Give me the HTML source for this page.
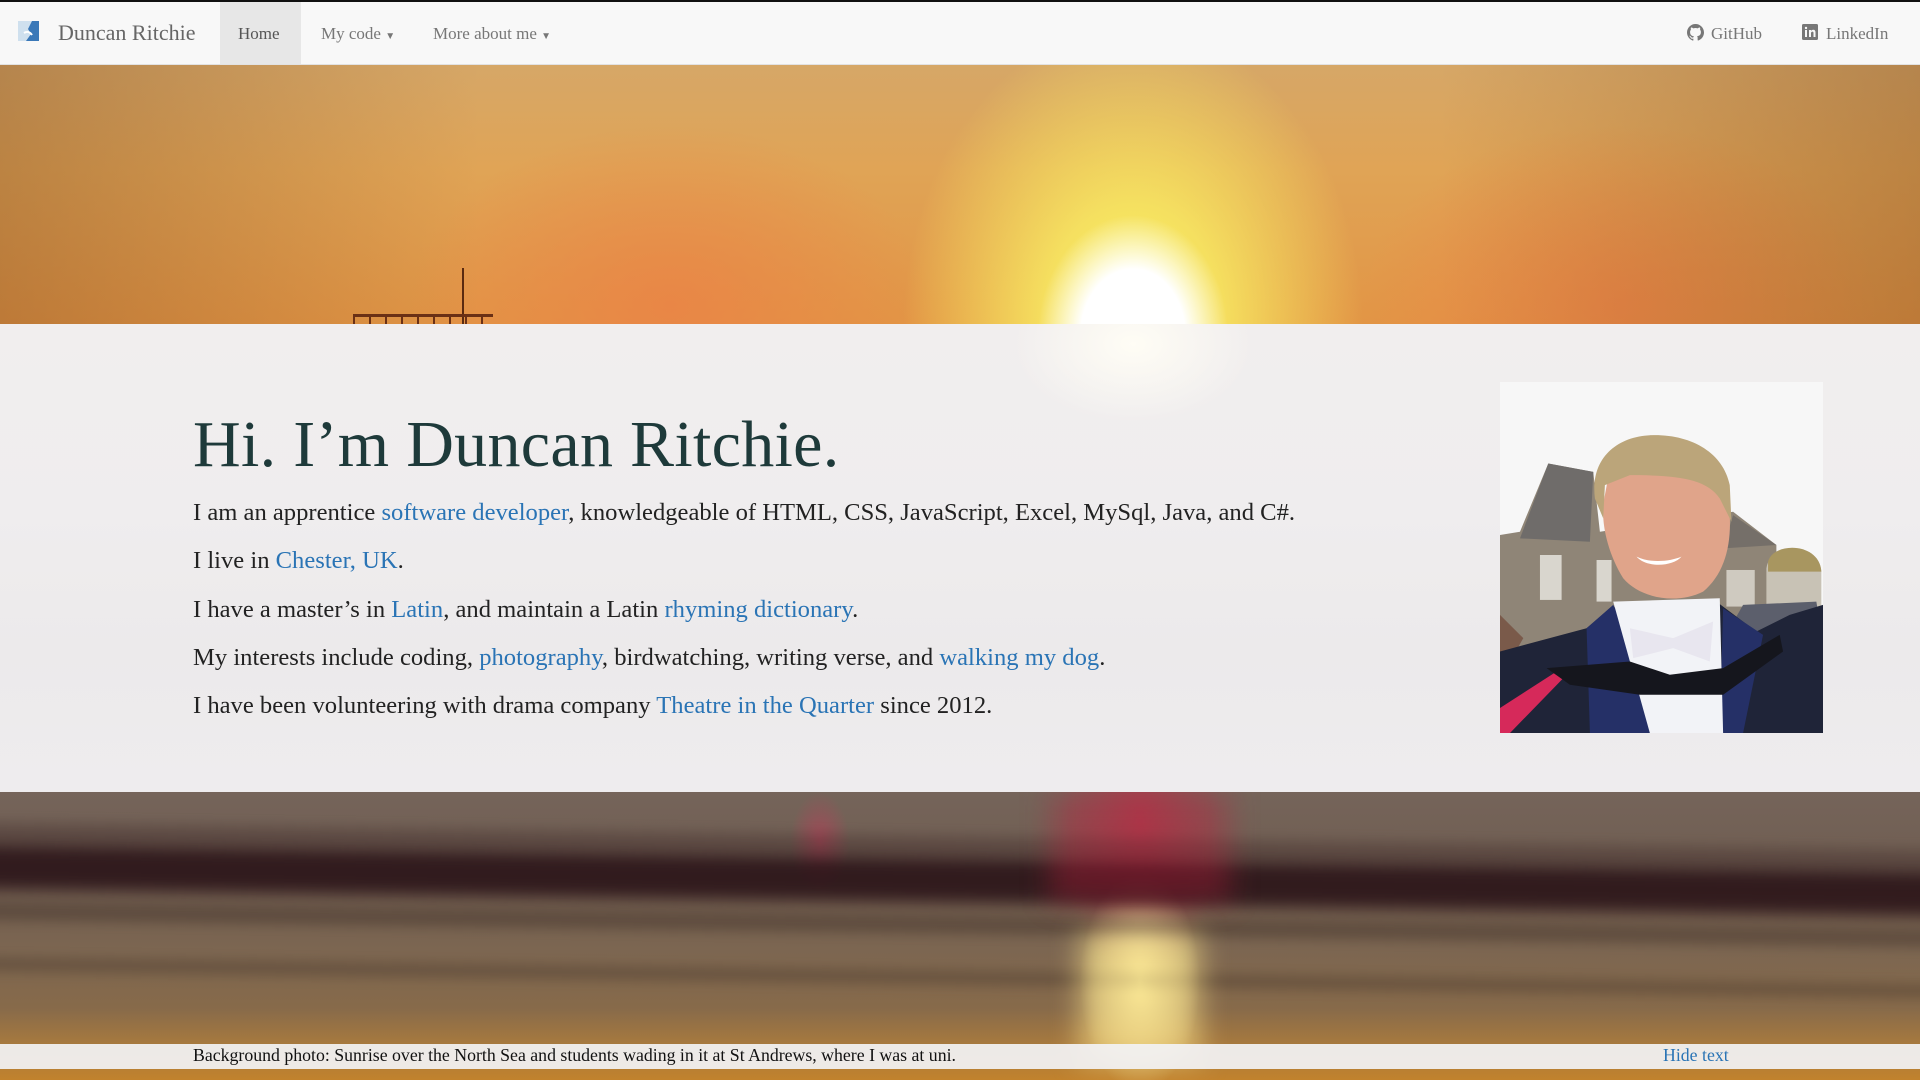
<!DOCTYPE html>
<html><head><meta charset="utf-8"><style>
*{margin:0;padding:0;box-sizing:border-box}
body{width:1920px;height:1080px;overflow:hidden;position:relative;font-family:"Liberation Serif",serif;background:#6b4a2a}
#nav{position:absolute;left:0;top:0;width:1920px;height:65px;background:#f8f8f8;border-top:2px solid #111;border-bottom:1px solid #e2e2e2;z-index:5;color:#777;font-size:17px}
#nav .i{position:absolute;top:22px}
#hero{position:absolute;left:0;top:65px;width:1920px;height:260px;
background:radial-gradient(ellipse 95px 120px at 1133px 270px,#fff 0%,#fff 55%,rgba(255,255,240,0) 100%),
radial-gradient(ellipse 230px 300px at 1133px 260px,rgba(250,250,90,1) 0%,rgba(250,240,100,.8) 40%,rgba(245,190,80,0) 100%),
radial-gradient(ellipse 260px 180px at 670px 240px,rgba(235,130,70,.8),rgba(235,130,70,0)),
radial-gradient(ellipse 260px 180px at 1620px 240px,rgba(235,130,70,.8),rgba(235,130,70,0)),
linear-gradient(180deg,#d6a767 0%,#e0a456 40%,#e29545 100%)}
#hero:before{content:"";position:absolute;left:0;top:0;right:0;bottom:0;background:linear-gradient(90deg,rgba(120,70,30,.35),rgba(0,0,0,0) 25%,rgba(0,0,0,0) 75%,rgba(120,70,30,.35))}
#panel{position:absolute;left:0;top:324px;width:1920px;height:468px;background:radial-gradient(ellipse 120px 80px at 1133px 20px,#fffdf5,rgba(255,250,240,0)),linear-gradient(180deg,#f1eeee 0%,#efedee 40%,#eceaeb 70%,#eeecee 100%)}
#beach{position:absolute;left:0;top:792px;width:1920px;height:288px;overflow:hidden;
background:
radial-gradient(ellipse 60px 110px at 1140px 190px,rgba(255,245,170,.95),rgba(255,200,80,0)),
radial-gradient(ellipse 80px 160px at 1140px 30px,rgba(200,40,70,.55),rgba(200,40,70,0)),
radial-gradient(ellipse 30px 50px at 820px 50px,rgba(210,50,90,.5),rgba(210,50,90,0)),
linear-gradient(180deg,#75645a 0%,#6f5d50 30%,#7c6651 55%,#876a4a 75%,#a87a3e 88%,#c1822d 100%)}
.band{position:absolute;left:-20px;width:1960px;transform:rotate(0.8deg);transform-origin:0 0}
.ph{position:absolute;left:1500px;top:382px;width:323px;height:351px}
h1{position:absolute;left:193px;top:407px;font-size:66px;font-weight:normal;color:#1e3a3a;white-space:nowrap;letter-spacing:0.3px}
.p{position:absolute;left:193px;font-size:24.6px;color:#222;white-space:nowrap}
a{color:#2a74b5;text-decoration:none}
#foot{position:absolute;left:0;top:1044px;width:1920px;height:25px;background:rgba(242,242,244,.93);font-size:17.8px;color:#111}
</style></head><body>
<div id="nav">
 <svg style="position:absolute;left:18px;top:19px" width="21" height="20" viewBox="0 0 21 20"><rect width="21" height="20" fill="#3a78b8"/><path d="M0 0h14l-4 8 3 5-5 7H0z" fill="#cfe0ee"/><path d="M6 12c3-2 6-1 8 2" stroke="#fff" stroke-width="2" fill="none"/></svg>
 <span class="i" style="left:58px;top:18px;font-size:22px;color:#666">Duncan Ritchie</span>
 <div style="position:absolute;left:220px;top:0;width:81px;height:62px;background:#e7e7e7"></div>
 <span class="i" style="left:238px;color:#555">Home</span>
 <span class="i" style="left:321px">My code <span style="font-size:10px">▼</span></span>
 <span class="i" style="left:433px">More about me <span style="font-size:10px">▼</span></span>
 <svg style="position:absolute;left:1687px;top:22px" width="17" height="17" viewBox="0 0 16 16"><path fill="#777" d="M8 0C3.6 0 0 3.6 0 8c0 3.5 2.3 6.5 5.5 7.6.4.1.5-.2.5-.4v-1.4c-2.2.5-2.7-1-2.7-1-.4-.9-.9-1.2-.9-1.2-.7-.5.1-.5.1-.5.8.1 1.2.8 1.2.8.7 1.2 1.9.9 2.3.7.1-.5.3-.9.5-1.1-1.8-.2-3.6-.9-3.6-4 0-.9.3-1.6.8-2.1-.1-.2-.4-1 .1-2.1 0 0 .7-.2 2.2.8.6-.2 1.3-.3 2-.3s1.4.1 2 .3c1.5-1 2.2-.8 2.2-.8.4 1.1.2 1.9.1 2.1.5.6.8 1.3.8 2.1 0 3.1-1.9 3.7-3.6 3.9.3.3.5.8.5 1.5v2.2c0 .2.1.5.6.4C13.7 14.5 16 11.5 16 8c0-4.4-3.6-8-8-8z"/></svg>
 <span class="i" style="left:1711px">GitHub</span>
 <svg style="position:absolute;left:1802px;top:22px" width="16" height="16" viewBox="0 0 16 16"><rect width="16" height="16" rx="1.5" fill="#777"/><rect x="3" y="6" width="2" height="7" fill="#f8f8f8"/><circle cx="4" cy="4" r="1.2" fill="#f8f8f8"/><path d="M7 6h2v1c.5-.8 1.3-1.2 2.3-1.2 1.5 0 2.2 1 2.2 2.7V13h-2V9c0-.9-.3-1.4-1-1.4S9 8.2 9 9v4H7z" fill="#f8f8f8"/></svg>
 <span class="i" style="left:1826px">LinkedIn</span>
</div>
<div id="hero">
 <div style="position:absolute;left:462px;top:203px;width:2px;height:57px;background:#5a2a10"></div>
 <div style="position:absolute;left:353px;top:249px;width:140px;height:3px;background:#6a3015"></div>
 <div style="position:absolute;left:353px;top:249px;width:140px;height:11px;background:repeating-linear-gradient(90deg,#6a3015 0 2px,transparent 2px 16px)"></div>
</div>
<div id="panel"></div>
<div id="beach">
 <div class="band" style="top:30px;height:22px;background:rgba(60,40,40,.35);filter:blur(6px)"></div>
 <div class="band" style="top:52px;height:45px;background:rgba(35,12,18,.82);filter:blur(8px)"></div>
 <div class="band" style="top:110px;height:18px;background:rgba(50,35,30,.35);filter:blur(6px)"></div>
 <div class="band" style="top:165px;height:14px;background:rgba(50,35,30,.3);filter:blur(6px)"></div>
 <div style="position:absolute;left:1050px;top:0;width:180px;height:110px;background:rgba(190,30,60,.35);filter:blur(14px)"></div>
 <div style="position:absolute;left:1080px;top:140px;width:120px;height:130px;background:rgba(255,230,140,.6);filter:blur(14px)"></div>
</div>
<h1>Hi. I’m Duncan Ritchie.</h1>
<div class="p" style="top:499px">I am an apprentice <a>software developer</a>, knowledgeable of HTML, CSS, JavaScript, Excel, MySql, Java, and C#.</div>
<div class="p" style="top:547px">I live in <a>Chester, UK</a>.</div>
<div class="p" style="top:596px">I have a master’s in <a>Latin</a>, and maintain a Latin <a>rhyming dictionary</a>.</div>
<div class="p" style="top:644px">My interests include coding, <a>photography</a>, birdwatching, writing verse, and <a>walking my dog</a>.</div>
<div class="p" style="top:692px">I have been volunteering with drama company <a>Theatre in the Quarter</a> since 2012.</div>
<svg class="ph" viewBox="30 20 970 1055" preserveAspectRatio="none">
 <rect x="30" y="20" width="970" height="1055" fill="#f7f7f7"/>
 <path d="M30 480 L90 470 L175 265 L310 290 L330 470 L730 410 L860 510 L860 760 L30 820Z" fill="#8f8577"/>
 <path d="M90 490 L175 265 L310 290 L300 500Z" fill="#6f6c6a"/>
 <path d="M730 420 L860 510 L700 520Z" fill="#756f69"/>
 <rect x="150" y="540" width="65" height="135" fill="#d9d6ce"/>
 <rect x="320" y="555" width="45" height="125" fill="#d9d6ce"/>
 <rect x="710" y="585" width="85" height="110" fill="#cfcac0"/>
 <path d="M830 580 C840 500 990 500 995 590 L995 700 L830 700Z" fill="#c8c2b5"/>
 <path d="M835 560 C850 500 990 500 995 590 L835 590Z" fill="#a89660"/>
 <path d="M720 760 L760 690 L980 680 L1000 800 L870 820Z" fill="#5c5f6c"/>
 <path d="M30 720 L100 790 L60 860 L30 860Z" fill="#7a5a4a"/>
 <path d="M30 830 L290 760 L360 700 L420 690 L680 680 L800 770 L900 720 L1000 690 L1000 1075 L30 1075Z" fill="#1f2438"/>
 <path d="M290 760 L370 690 L470 880 L480 1075 L300 1075Z" fill="#253067"/>
 <path d="M700 700 L820 780 L760 1075 L690 1075Z" fill="#253067"/>
 <path d="M370 680 L690 670 L700 1075 L480 1075Z" fill="#f2f3f7"/>
 <path d="M420 760 L550 790 L670 740 L660 860 L550 820 L430 850Z" fill="#e8e6ef"/>
 <path d="M30 1000 L200 890 L230 900 L60 1075 L30 1075Z" fill="#d6295a"/>
 <path d="M170 880 L420 860 L540 900 L700 880 L870 780 L880 830 L700 960 L450 960 L240 930Z" fill="#15161d"/>
 <path d="M345 360 C330 420 345 520 400 610 C450 670 560 690 640 650 C700 600 725 520 720 420 L690 270 L360 280Z" fill="#e0a48a"/>
 <path d="M315 370 C300 250 380 185 480 180 C600 175 700 230 720 330 L725 440 L690 370 C650 310 560 300 420 300 L345 330 L340 430Z" fill="#bba57a"/>
 <path d="M440 545 C480 565 540 560 575 545 C550 575 470 580 440 545Z" fill="#fff"/>
</svg>
<div id="foot">
 <span style="position:absolute;left:193px;top:1px">Background photo: Sunrise over the North Sea and students wading in it at St Andrews, where I was at uni.</span>
 <a style="position:absolute;left:1663px;top:1px">Hide text</a>
</div>
</body></html>
